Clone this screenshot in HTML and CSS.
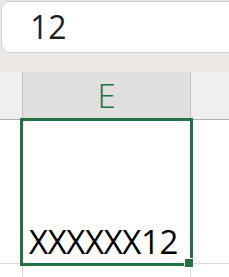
FILE: index.html
```html
<!DOCTYPE html>
<html>
<head>
<meta charset="utf-8">
<link rel="stylesheet" href="styles.css">
</head>
<body>
<div class="topbar">
  <div class="formula">12</div>
</div>
<div class="header">
  <div class="hcell side"></div>
  <div class="hcell colE">E</div>
  <div class="hcell rest"></div>
</div>
<div class="sheet">
  <div class="row row1">
    <div class="cell side"></div>
    <div class="cell colE"><span class="value">XXXXXX12</span></div>
    <div class="cell rest"></div>
  </div>
  <div class="row row2">
    <div class="cell side"></div>
    <div class="cell colE"></div>
    <div class="cell rest"></div>
  </div>
  <div class="selection"></div>
  <div class="handle"></div>
</div>
</body>
</html>
```
FILE: styles.css
```css
html, body {
  margin: 0;
  padding: 0;
  background: #ffffff;
  width: 229px;
  height: 277px;
  overflow: hidden;
  font-family: "Open Sans", "Liberation Sans", sans-serif;
}
.topbar {
  height: 72px;
  background: #ebe7e4;
  padding: 1px 0 0 1px;
  box-sizing: border-box;
}
.formula {
  height: 52px;
  box-sizing: border-box;
  background: #ffffff;
  border: 1px solid #d4d0cd;
  border-right: none;
  border-radius: 9px 0 0 9px;
  padding-left: 28px;
  font-size: 32px;
  line-height: 50px;
  color: #1f1f1f;
}
.header {
  display: flex;
  height: 48px;
  box-sizing: border-box;
  border-bottom: 1px solid #b2b2b2;
}
.hcell.side {
  width: 22px;
  background: #efefef;
}
.hcell.colE {
  background: #dfdfdf;
  border-left: 1px solid #c4c4c4;
  border-right: 1px solid #c4c4c4;
  box-sizing: border-box;
  width: 169px;
  text-align: center;
  color: #217346;
  font-size: 33px;
  font-weight: 300;
  line-height: 48px;
}
.hcell.rest {
  flex: 1;
  background: #efefef;
}
.sheet {
  position: relative;
}
.row {
  display: flex;
  border-bottom: 1px solid #dadada;
}
.row1 { height: 143px; }
.row2 { height: 20px; border-bottom: none; }
.cell.side { width: 22px; }
.cell.colE {
  width: 169px;
  box-sizing: border-box;
  border-left: 1px solid #dadada;
  border-right: 1px solid #dadada;
  display: flex;
  align-items: flex-end;
  padding-left: 6px;
}
.cell.rest { flex: 1; }
.value {
  font-size: 33px;
  line-height: 33px;
  letter-spacing: -0.4px;
  color: #000000;
  padding-bottom: 5px;
}
.selection {
  position: absolute;
  left: 20px;
  top: -2px;
  width: 173px;
  height: 148px;
  box-sizing: border-box;
  border: 3px solid #217346;
}
.handle {
  position: absolute;
  left: 184px;
  top: 138px;
  width: 10px;
  height: 10px;
  box-sizing: border-box;
  background: #217346;
  border: 1px solid #ffffff;
}
```
